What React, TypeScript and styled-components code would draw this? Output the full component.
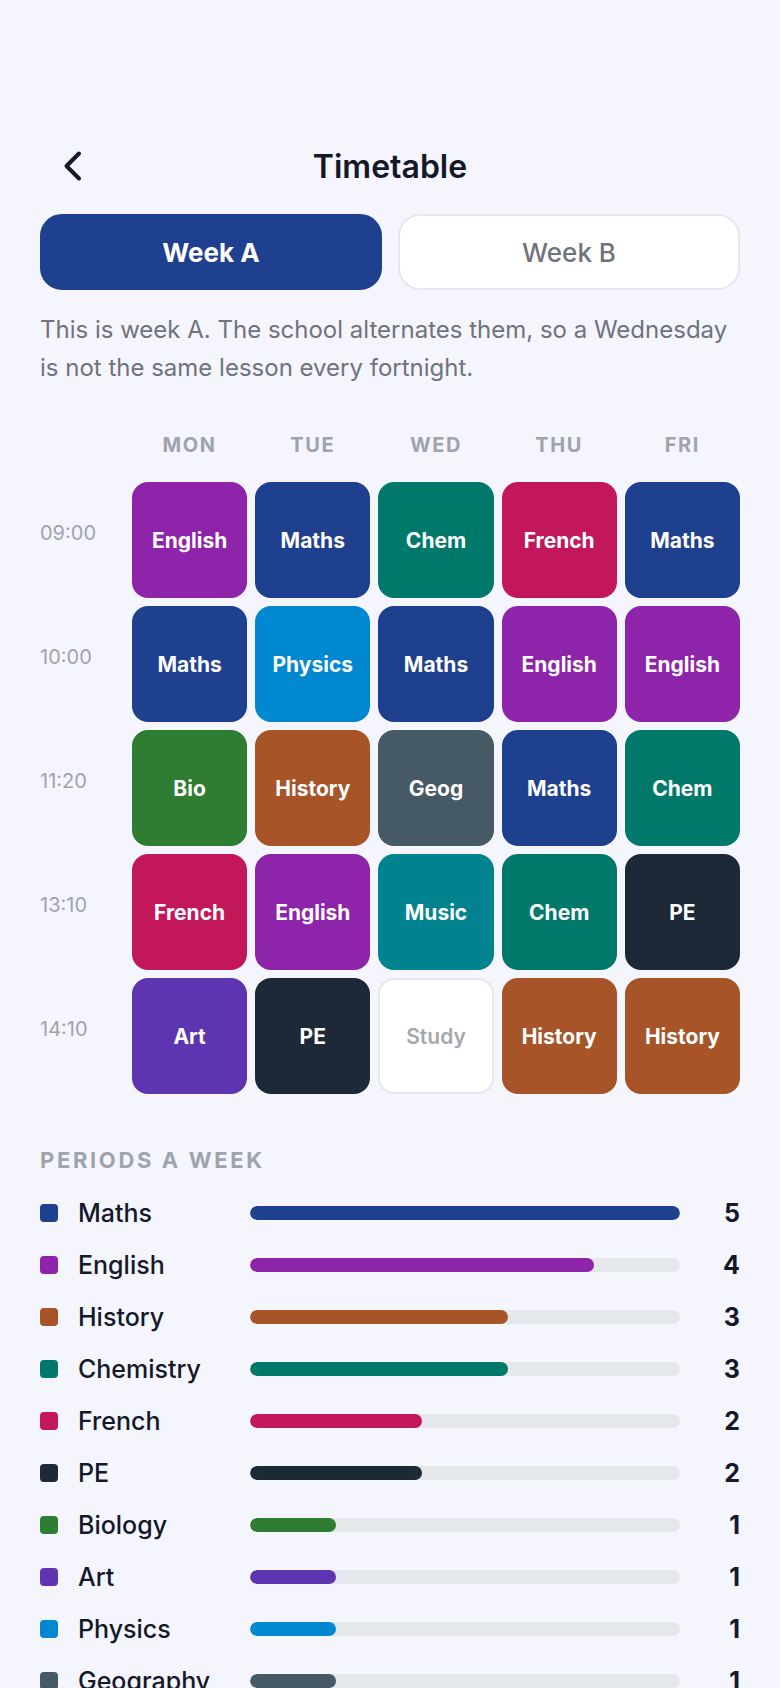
import { useState } from "react";
import styled, { createGlobalStyle } from "styled-components";

const GlobalStyle = createGlobalStyle`
  * {
    box-sizing: border-box;
  }

  body {
    margin: 0;
    font-family: Inter, "Liberation Sans", sans-serif;
    background-color: #f4f5fd;
    color: #141828;
  }
`;

const Page = styled.main`
  padding: 128px 40px 40px;
`;

const Header = styled.header`
  display: grid;
  grid-template-columns: 66px 1fr 66px;
  align-items: center;
  height: 78px;
  margin-bottom: 8px;
`;

const BackButton = styled.button`
  display: flex;
  align-items: center;
  justify-content: center;
  height: 66px;
  padding: 0;
  border: none;
  background: none;
  color: inherit;
  cursor: pointer;
`;

const Title = styled.h1`
  margin: 0;
  font-size: 32px;
  line-height: 40px;
  font-weight: 600;
  text-align: center;
`;

const WeekSwitch = styled.div`
  display: flex;
  gap: 16px;
`;

const WeekButton = styled.button<{ $active: boolean }>`
  flex: 1;
  height: 76px;
  border: 2px solid ${({ $active }) => ($active ? "#1f408f" : "#e6e7eb")};
  border-radius: 22px;
  background-color: ${({ $active }) => ($active ? "#1f408f" : "#ffffff")};
  color: ${({ $active }) => ($active ? "#ffffff" : "#6f737b")};
  font-family: inherit;
  font-size: 26px;
  font-weight: ${({ $active }) => ($active ? 700 : 500)};
  cursor: pointer;
`;

const Note = styled.p`
  margin: 21px 0 46px;
  font-size: 24px;
  line-height: 38px;
  color: #6f737b;
`;

const Table = styled.table`
  display: block;

  thead,
  tbody {
    display: grid;
    gap: 8px;
  }

  thead {
    margin-bottom: 25px;
  }
`;

const TableRow = styled.tr`
  display: grid;
  grid-template-columns: 84px repeat(5, minmax(0, 1fr));
  gap: 8px;
`;

const Corner = styled.td`
  padding: 0;
`;

const DayHead = styled.th`
  padding: 0;
  font-size: 20px;
  line-height: 24px;
  font-weight: 700;
  letter-spacing: 0.08em;
  color: #9fa3ab;
`;

const TimeHead = styled.th`
  align-self: center;
  padding: 0 0 14px;
  font-size: 20px;
  line-height: 24px;
  font-weight: 400;
  text-align: left;
  color: #9fa3ab;
`;

const Lesson = styled.td<{ $color?: string }>`
  display: flex;
  align-items: center;
  justify-content: center;
  height: 116px;
  padding: 0;
  border: 2px solid ${({ $color }) => $color ?? "#e6e7eb"};
  border-radius: 16px;
  background-color: ${({ $color }) => $color ?? "#ffffff"};
  color: ${({ $color }) => ($color ? "#ffffff" : "#a5a7ab")};
  font-size: 21px;
  font-weight: ${({ $color }) => ($color ? 700 : 600)};
`;

const SectionTitle = styled.h2`
  margin: 52px 0 23px;
  font-size: 22px;
  line-height: 28px;
  font-weight: 700;
  letter-spacing: 0.12em;
  text-transform: uppercase;
  color: #9fa3ab;
`;

const SubjectList = styled.ul`
  display: grid;
  gap: 20px;
  margin: 0;
  padding: 0;
  list-style: none;
`;

const SubjectRow = styled.li`
  display: grid;
  grid-template-columns: 18px 152px 1fr 40px;
  align-items: center;
  gap: 20px;
  font-size: 25px;
  line-height: 32px;
  font-weight: 500;
`;

const Swatch = styled.span<{ $color: string }>`
  height: 18px;
  border-radius: 4px;
  background-color: ${({ $color }) => $color};
`;

const Track = styled.div`
  height: 14px;
  border-radius: 7px;
  background-color: #e5e8eb;
  overflow: hidden;
`;

const Bar = styled.div<{ $color: string }>`
  height: 100%;
  border-radius: 7px;
  background-color: ${({ $color }) => $color};
`;

const Count = styled.span`
  font-weight: 700;
  text-align: right;
`;

const colors: Record<string, string> = {
  Maths: "#1f408f",
  English: "#8e24aa",
  History: "#a65428",
  Chem: "#00796b",
  French: "#c2185b",
  PE: "#1e2937",
  Bio: "#2e7d32",
  Art: "#5e35b1",
  Physics: "#0288d1",
  Geog: "#455a64",
  Music: "#00838f",
};

const days = ["MON", "TUE", "WED", "THU", "FRI"];

const periods = [
  { time: "09:00", lessons: ["English", "Maths", "Chem", "French", "Maths"] },
  { time: "10:00", lessons: ["Maths", "Physics", "Maths", "English", "English"] },
  { time: "11:20", lessons: ["Bio", "History", "Geog", "Maths", "Chem"] },
  { time: "13:10", lessons: ["French", "English", "Music", "Chem", "PE"] },
  { time: "14:10", lessons: ["Art", "PE", "Study", "History", "History"] },
];

const subjects = [
  { key: "Maths", name: "Maths", count: 5 },
  { key: "English", name: "English", count: 4 },
  { key: "History", name: "History", count: 3 },
  { key: "Chem", name: "Chemistry", count: 3 },
  { key: "French", name: "French", count: 2 },
  { key: "PE", name: "PE", count: 2 },
  { key: "Bio", name: "Biology", count: 1 },
  { key: "Art", name: "Art", count: 1 },
  { key: "Physics", name: "Physics", count: 1 },
  { key: "Geog", name: "Geography", count: 1 },
  { key: "Music", name: "Music", count: 1 },
];

const maxCount = Math.max(...subjects.map((s) => s.count));

const BackIcon = () => (
  <svg width="50" height="50" viewBox="0 0 50 50" fill="none" aria-hidden="true">
    <path
      d="M31 11.5 18.5 24 31 36.5"
      stroke="currentColor"
      strokeWidth="4"
      strokeLinecap="round"
      strokeLinejoin="round"
    />
  </svg>
);

export default function App() {
  const [week, setWeek] = useState("A");

  return (
    <>
      <GlobalStyle />
      <Page>
        <Header>
          <BackButton aria-label="Back">
            <BackIcon />
          </BackButton>
          <Title>Timetable</Title>
        </Header>

        <WeekSwitch>
          {["A", "B"].map((w) => (
            <WeekButton
              key={w}
              $active={week === w}
              aria-pressed={week === w}
              onClick={() => setWeek(w)}
            >
              {`Week ${w}`}
            </WeekButton>
          ))}
        </WeekSwitch>

        <Note>
          {`This is week ${week}. The school alternates them, so a Wednesday is not the same lesson every fortnight.`}
        </Note>

        <Table>
          <thead>
            <TableRow>
              <Corner />
              {days.map((day) => (
                <DayHead key={day} scope="col">{day}</DayHead>
              ))}
            </TableRow>
          </thead>
          <tbody>
            {periods.map(({ time, lessons }) => (
              <TableRow key={time}>
                <TimeHead scope="row">{time}</TimeHead>
                {lessons.map((lesson, i) => (
                  <Lesson key={days[i]} $color={colors[lesson]}>{lesson}</Lesson>
                ))}
              </TableRow>
            ))}
          </tbody>
        </Table>

        <SectionTitle>Periods a week</SectionTitle>
        <SubjectList>
          {subjects.map(({ key, name, count }) => (
            <SubjectRow key={key}>
              <Swatch $color={colors[key]} />
              <span>{name}</span>
              <Track>
                <Bar $color={colors[key]} style={{ width: `${(count / maxCount) * 100}%` }} />
              </Track>
              <Count>{count}</Count>
            </SubjectRow>
          ))}
        </SubjectList>
      </Page>
    </>
  );
}
